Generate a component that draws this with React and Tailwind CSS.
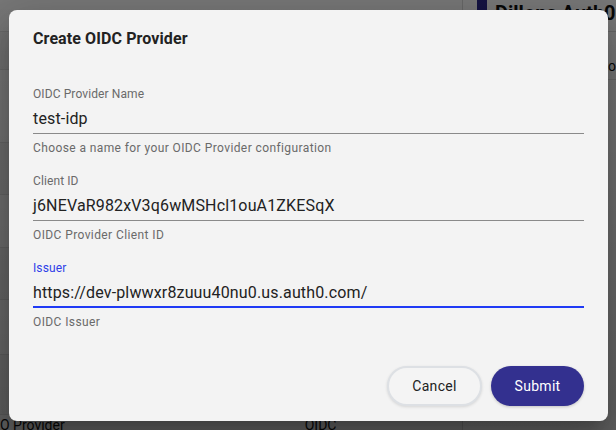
import React from 'react'

const fields = [
  { label: 'OIDC Provider Name', value: 'test-idp', helper: 'Choose a name for your OIDC Provider configuration' },
  { label: 'Client ID', value: 'j6NEVaR982xV3q6wMSHcl1ouA1ZKESqX', helper: 'OIDC Provider Client ID' },
  { label: 'Issuer', value: 'https://dev-plwwxr8zuuu40nu0.us.auth0.com/', helper: 'OIDC Issuer', focused: true },
]

function Field({ label, value, helper, focused }) {
  return (
    <div className="flex flex-col">
      <div className={`h-4 text-[12px] leading-4 tracking-[0.1px] ${focused ? 'text-[#2f3fe8]' : 'text-[#6a6a6a]'}`}>
        {label}
      </div>
      <div
        className={`mt-[5px] h-[27px] text-[16px] leading-[24px] tracking-[0.15px] text-[#222] ${
          focused ? 'border-b-2 border-[#1f3af5]' : 'border-b border-[#8a8a8a]'
        }`}
      >
        {value}
      </div>
      <div className="mt-[6px] h-4 text-[12px] leading-4 tracking-[0.4px] text-[#6a6a6a]">{helper}</div>
    </div>
  )
}

function Backdrop() {
  const rows = [32, 38, 73, 52, 53, 52, 55, 60]
  return (
    <div className="flex h-full w-full bg-[#ececec]">
      <div className="flex w-[462px] shrink-0 flex-col">
        {rows.map((h, i) => (
          <div
            key={i}
            style={{ height: h }}
            className={`shrink-0 border-b border-[#d4d4d4] ${i % 2 ? 'bg-[#e4e4e4]' : 'bg-[#eeeeee]'}`}
          />
        ))}
        <div className="flex gap-[240px] whitespace-nowrap text-[14px] text-[#111]">
          <span>O Provider</span>
          <span>OIDC</span>
        </div>
      </div>
      <div className="flex min-w-0 flex-1 flex-col overflow-hidden border-l border-[#cfcfcf] bg-[#f0f0f0]">
        <div className="flex h-[32px] items-start gap-2 border-b border-[#d0d0d0] pl-[14px]">
          <div className="h-[28px] w-[10px] shrink-0 bg-[#2a2785]" />
          <div className="-mt-[2px] whitespace-nowrap text-[20px] font-bold text-[#111]">Dillons Auth0 C</div>
        </div>
        <div className="flex h-[48px] items-end justify-end border-b border-[#d8d8d8] pb-[2px] text-[14px] text-[#111]">
          <span>o</span>
        </div>
      </div>
    </div>
  )
}

export default function App() {
  return (
    <div className="relative h-[430px] w-[616px] overflow-hidden font-['Roboto',sans-serif]">
      <Backdrop />
      <div className="absolute inset-0 bg-gradient-to-b from-black/50 to-black/60" />

      <div className="absolute left-[9px] top-[10px] flex h-[411px] w-[599px] flex-col rounded-lg bg-[#f3f3f3] px-6 shadow-[0_11px_15px_-7px_rgba(0,0,0,0.2),0_24px_38px_3px_rgba(0,0,0,0.14),0_9px_46px_8px_rgba(0,0,0,0.12)]">
        <h2 className="pt-4 text-[16px] font-bold leading-[25.6px] tracking-[0.1px] text-[#222]">Create OIDC Provider</h2>

        <div className="mt-[34px] flex flex-col gap-[17px]">
          {fields.map((f) => (
            <Field key={f.label} {...f} />
          ))}
        </div>

        <div className="mt-auto flex justify-end gap-[9px] pb-[15px]">
          <button className="h-10 w-[95px] rounded-full border-2 border-[#dde0e4] bg-[#f4f4f4] text-[14px] font-normal tracking-[0.3px] text-[#222] shadow-[0_1px_3px_rgba(0,0,0,0.12)]">
            Cancel
          </button>
          <button className="h-10 w-[93px] rounded-full bg-[#33308f] text-[14px] font-normal tracking-[0.3px] text-white shadow-[0_1px_3px_rgba(0,0,0,0.2)]">
            Submit
          </button>
        </div>
      </div>
    </div>
  )
}
